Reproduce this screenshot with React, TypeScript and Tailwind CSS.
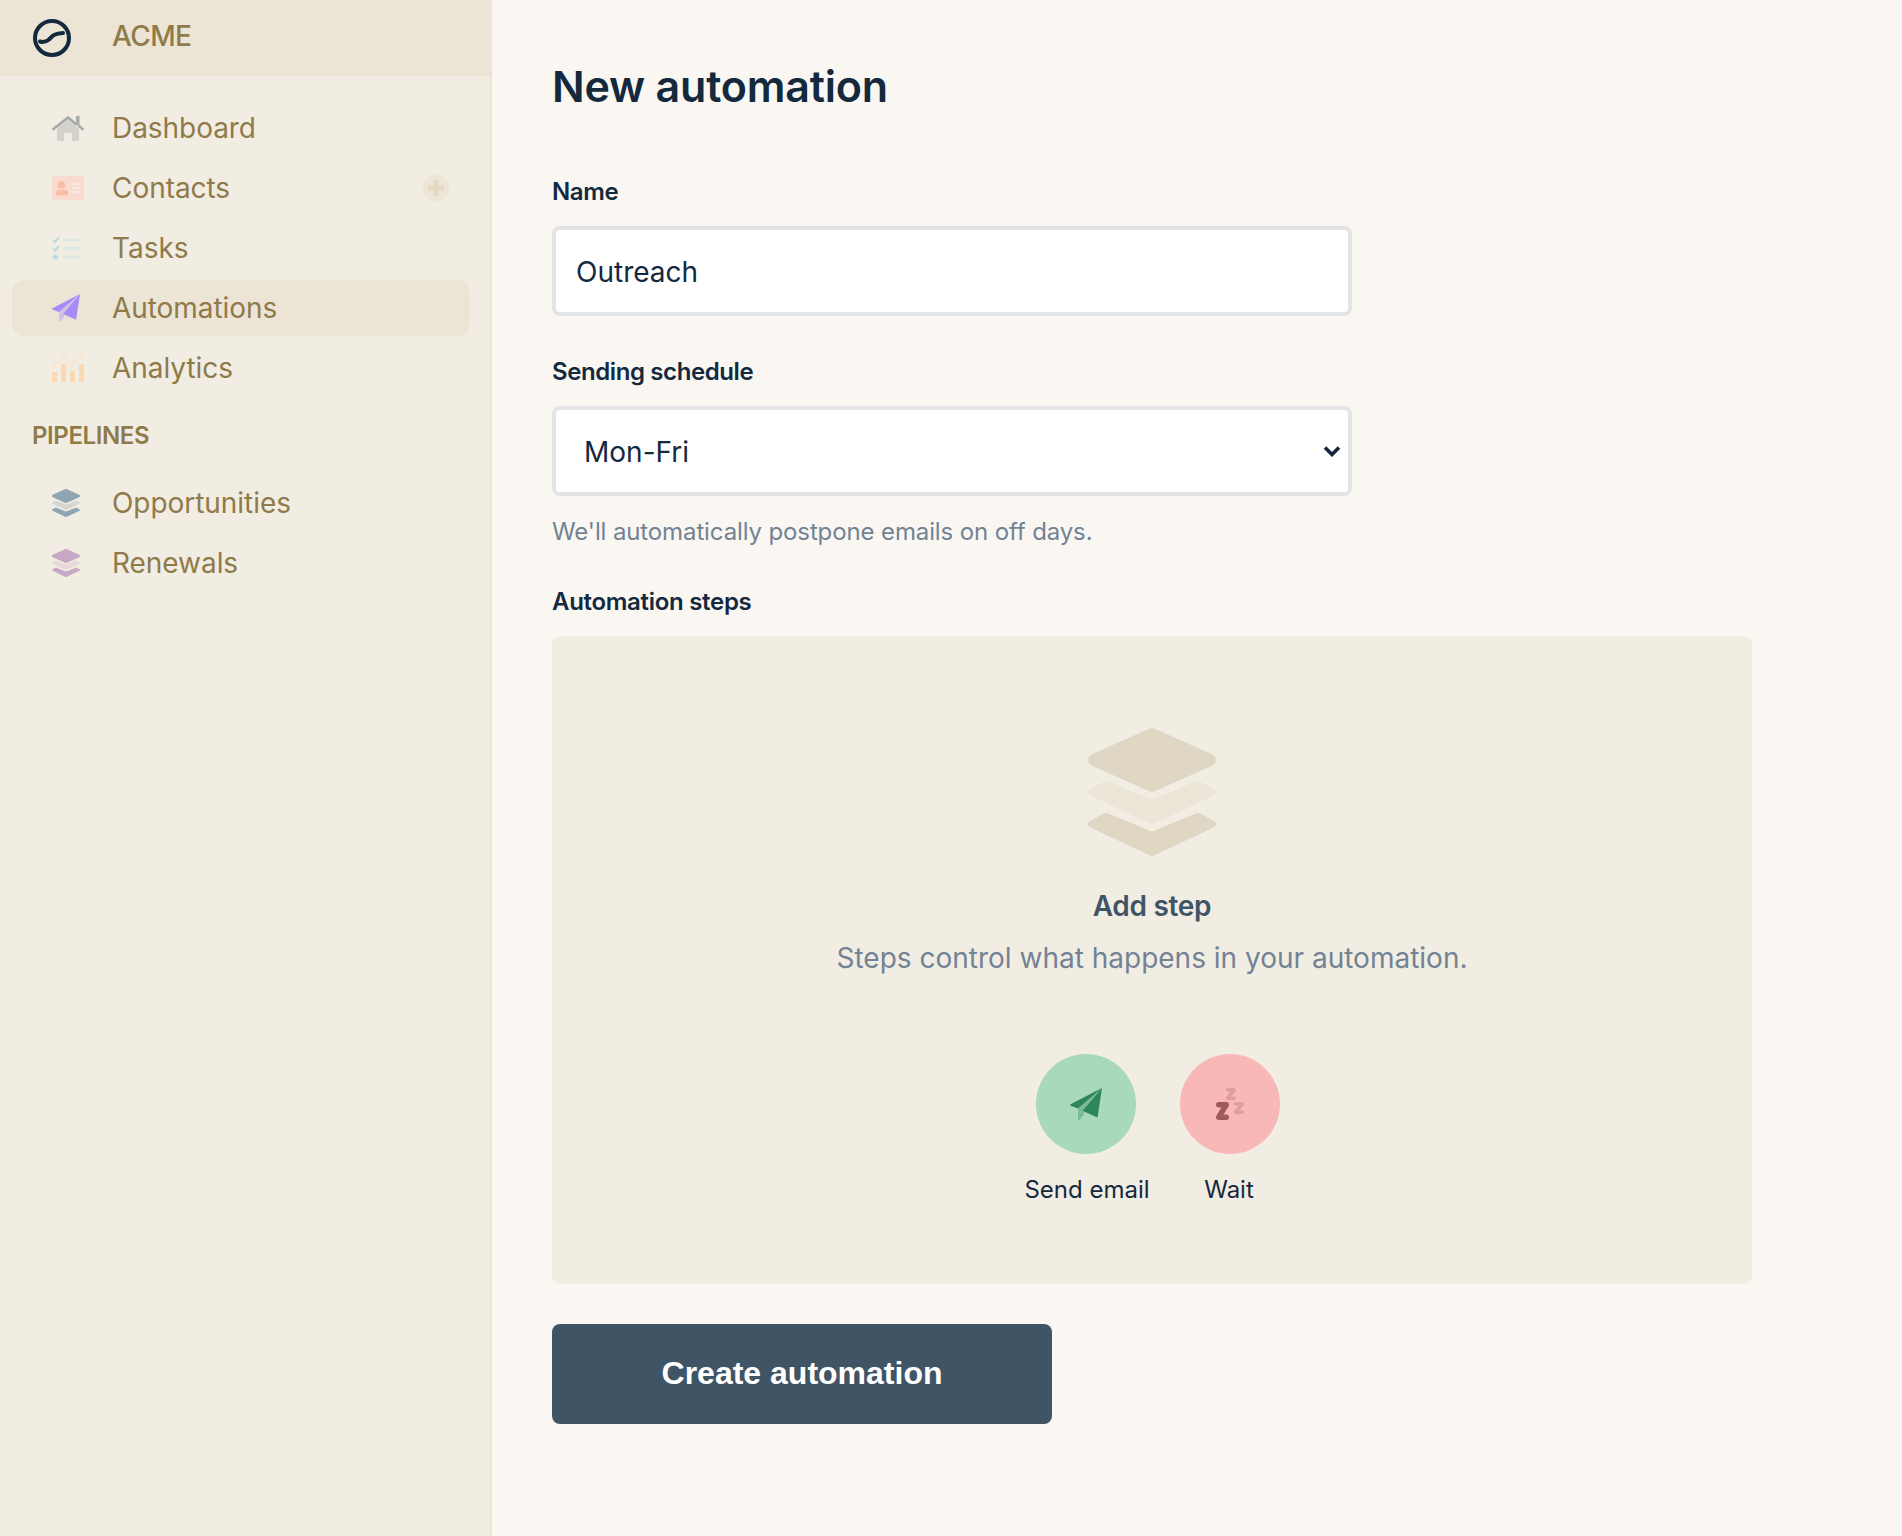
import React from 'react';

function LayersIcon({ top, mid, className }: { top: string; mid: string; className: string }) {
    return (
        <svg viewBox="0 0 128 128" className={className} strokeLinejoin="round">
            <path d="M64 6 122 32 64 58 6 32Z" fill={top} stroke={top} strokeWidth={12} />
            <path d="M18 57 64 76 110 57 124 64 64 92 4 64Z" fill={mid} stroke={mid} strokeWidth={8} />
            <path d="M18 89 64 108 110 89 124 96 64 124 4 96Z" fill={top} stroke={top} strokeWidth={8} />
        </svg>
    );
}

function PlaneIcon({ dark, light, className }: { dark: string; light: string; className: string }) {
    return (
        <svg viewBox="0 0 28 28" className={className}>
            <path d="M28 0 7 18V27.500Q7.500 28.500 8.500 27.500L12 23.500V20Z" fill={light} />
            <path d="M28 0 .5 14.300Q-.3 15 .5 15.500L7 18Z" fill={dark} />
            <path d="M28 0 11 20 23.300 25.500Q24 25.700 24.200 25Z" fill={dark} />
        </svg>
    );
}

function HomeIcon() {
    return (
        <svg viewBox="0 0 32 25" className="h-[25px] w-8">
            <path d="M5 12.500 16 3.500 27 12.500V24Q27 25 26 25H20V17H12V25H6Q5 25 5 24Z" fill="#d2d1cc" />
            <path d="M1.500 13 16 1.500 24 8M27.500 10.500 30.500 13" fill="none" stroke="#a7aaab" strokeWidth={2.800} strokeLinecap="round" strokeLinejoin="round" />
            <path d="M24 0h3.500v11L24 8Z" fill="#a7aaab" />
        </svg>
    );
}

function CardIcon() {
    return (
        <svg viewBox="0 0 32 24" className="h-6 w-8">
            <rect width="32" height="24" rx="2" fill="#f9dccf" />
            <circle cx="9.500" cy="9" r="3.800" fill="#f9bda6" />
            <rect x="4" y="14" width="12" height="5.500" rx="2.500" fill="#f9bda6" />
            <path d="M20 8h8M20 12h8M20 16h8" stroke="#f6e9df" strokeWidth={1.800} />
        </svg>
    );
}

function TasksIcon() {
    return (
        <svg viewBox="0 0 28 24" className="h-6 w-7">
            <path d="M1 4 3 6 7 1.500M1 12.500 3 14.500 7 10" fill="none" stroke="#bcdcdf" strokeWidth={2.200} />
            <circle cx="3.500" cy="21" r="2.600" fill="#bcdcdf" />
            <path d="M11 4h17M11 12.500h17M11 21h17" stroke="#dfe8e2" strokeWidth={3} />
        </svg>
    );
}

function AnalyticsIcon() {
    return (
        <svg viewBox="0 0 32 28" className="h-7 w-8">
            <path d="M2.500 12 11.500 3 19 10 29.500 3" fill="none" stroke="#f7e7d2" strokeWidth={2.400} />
            <circle cx="2.500" cy="12" r="2.500" fill="#f7e7d2" />
            <circle cx="11.500" cy="3" r="2.500" fill="#f7e7d2" />
            <circle cx="19" cy="10" r="2.500" fill="#f7e7d2" />
            <circle cx="29.500" cy="3" r="2.500" fill="#f7e7d2" />
            <path d="M0 18h5v10H0ZM9 10h5v18H9ZM18 17h5v11h-5ZM27 10h5v18h-5Z" fill="#fad9b0" />
        </svg>
    );
}

function SleepIcon() {
    return (
        <svg viewBox="0 0 28 32" className="h-8 w-7" fill="none" strokeLinejoin="round" strokeLinecap="round">
            <path d="M11.800 1.800H18.200L11.800 10.200H18.200" stroke="#e09d9d" strokeWidth={3.600} />
            <path d="M19.800 15.800H26.200L19.800 24.200H26.200" stroke="#e09d9d" strokeWidth={3.600} />
            <path d="M2.750 16.750H10.250L2.750 29.250H10.250" stroke="#a05a5a" strokeWidth={5.500} />
        </svg>
    );
}

const mainNav = [
    { label: 'Dashboard', icon: <HomeIcon /> },
    { label: 'Contacts', icon: <CardIcon />, add: true },
    { label: 'Tasks', icon: <TasksIcon /> },
    { label: 'Automations', icon: <PlaneIcon dark="#a78bfa" light="#cfc4e6" className="h-7 w-7" />, active: true },
    { label: 'Analytics', icon: <AnalyticsIcon /> },
];

const pipelines = [
    { label: 'Opportunities', icon: <LayersIcon top="#8fa5b2" mid="#d6d6d2" className="h-7 w-7" /> },
    { label: 'Renewals', icon: <LayersIcon top="#c7a9c5" mid="#e7d9dc" className="h-7 w-7" /> },
];

function NavItem({ label, icon, add, active }: { label: string; icon: React.ReactNode; add?: boolean; active?: boolean }) {
    return (
        <div className={`flex h-14 items-center rounded-xl pl-10 pr-[21px] ${active ? 'bg-[#ece5d6]' : ''}`}>
            <div className="flex w-[60px] shrink-0 items-center">{icon}</div>
            <span className="text-[28px] tracking-[-0.05px] text-[#8f7a4a]">{label}</span>
            {add && (
                <div className="ml-auto flex size-[26px] items-center justify-center rounded-full bg-[#ece5d6]">
                    <svg viewBox="0 0 16 16" className="size-4">
                        <path d="M8 0.500V15.500M0.500 8H15.500" stroke="#e3d7bf" strokeWidth={4.500} strokeLinecap="round" />
                    </svg>
                </div>
            )}
        </div>
    );
}

export default function App() {
    return (
        <div className="flex h-screen overflow-hidden bg-[#faf7f2] font-[Inter,sans-serif] text-[#14293d]">
            <aside className="w-[492px] shrink-0 border-r-2 border-[#ece5d6] bg-[#f2ede3]">
                <div className="mr-[-2px] flex h-[76px] items-center bg-[#ece5d6] pl-[33px]">
                    <svg viewBox="0 0 38 38" className="size-[38px]" fill="none" stroke="#14293d">
                        <circle cx="19" cy="19" r="17" strokeWidth={4} />
                        <path d="M7 22.500C10 23.500 13 23 16 20.500C19.500 17 21 14.500 30 14" strokeWidth={4} strokeLinecap="round" />
                    </svg>
                    <span className="mb-1 ml-[41px] text-[28px] font-medium tracking-[-0.6px] text-[#8f7a4a]">ACME</span>
                </div>
                <nav className="ml-3 mr-5 mt-6 flex flex-col gap-1">
                    {mainNav.map((item) => (
                        <NavItem key={item.label} {...item} />
                    ))}
                </nav>
                <h3 className="mb-6 ml-8 mt-[25px] text-2xl font-semibold leading-[30px] tracking-[-0.4px] text-[#8f7a4a]">PIPELINES</h3>
                <nav className="ml-3 mr-5 flex flex-col gap-1">
                    {pipelines.map((item) => (
                        <NavItem key={item.label} {...item} />
                    ))}
                </nav>
            </aside>

            <main className="flex-1 pl-[60px]">
                <h1 className="mt-[58px] text-[43px] font-semibold leading-[56px] tracking-[-0.2px]">New automation</h1>

                <label className="mt-[62px] block text-2xl font-semibold leading-8 tracking-[-0.4px]">Name</label>
                <input
                    type="text"
                    defaultValue="Outreach"
                    className="mt-[18px] block h-[90px] w-[800px] rounded-lg border-4 border-[#e2e4e6] bg-white px-5 pt-0.5 text-[28px] outline-none"
                />

                <label className="mt-10 block text-2xl font-semibold leading-8 tracking-[-0.4px]">Sending schedule</label>
                <div className="relative mt-[18px] w-[800px]">
                    <select
                        defaultValue="Mon-Fri"
                        className="block h-[90px] w-full appearance-none rounded-lg border-4 border-[#e2e4e6] bg-white pl-7 pt-0.5 text-[28px] outline-none"
                    >
                        <option>Mon-Fri</option>
                        <option>Every day</option>
                    </select>
                    <svg viewBox="0 0 18 12" className="pointer-events-none absolute right-[11px] top-[39px] h-3 w-[18px]" fill="none" stroke="#14293d" strokeWidth={3.600}>
                        <path d="M2 2.500 9 9.500 16 2.500" />
                    </svg>
                </div>
                <p className="mt-5 text-2xl leading-8 tracking-[-0.12px] text-[#718394]">We'll automatically postpone emails on off days.</p>

                <label className="mt-[38px] block text-2xl font-semibold leading-8 tracking-[-0.3px]">Automation steps</label>
                <section className="mt-[18px] flex h-[648px] w-[1200px] flex-col items-center rounded-lg bg-[#f2ede3] pt-[92px]">
                    <LayersIcon top="#e0d6c4" mid="#ebe6d8" className="size-32" />
                    <h2 className="mt-8 text-[28px] font-semibold leading-9 tracking-[-0.3px] text-[#3f5566]">Add step</h2>
                    <p className="mt-4 text-[28px] leading-9 text-[#718394]">Steps control what happens in your automation.</p>
                    <div className="mt-[78px] flex gap-8">
                        <div className="flex w-[124px] flex-col items-center">
                            <div className="flex size-[100px] items-center justify-center rounded-full bg-[#a8d9bb]">
                                <PlaneIcon dark="#2f855a" light="#7dbb98" className="size-8" />
                            </div>
                            <span className="ml-0.5 mt-5 whitespace-nowrap text-2xl leading-8">Send email</span>
                        </div>
                        <div className="flex w-[100px] flex-col items-center">
                            <div className="flex size-[100px] items-center justify-center rounded-full bg-[#f9b8b8]">
                                <SleepIcon />
                            </div>
                            <span className="mr-0.5 mt-5 text-2xl leading-8">Wait</span>
                        </div>
                    </div>
                </section>
                <button className="mt-10 h-[100px] w-[500px] rounded-lg bg-[#3f5566] pb-0.5 font-['Liberation_Sans',sans-serif] text-[32px] font-bold text-white">
                    Create automation
                </button>
            </main>
        </div>
    );
}
